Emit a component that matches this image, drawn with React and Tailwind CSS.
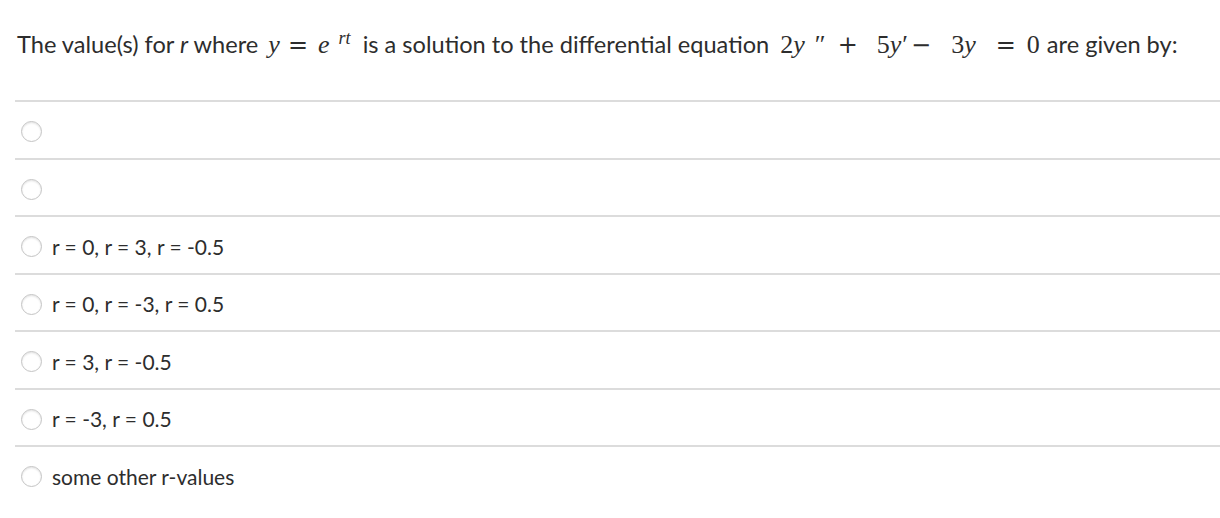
import React from 'react';

const options = [
    '',
    '',
    'r = 0, r = 3, r = -0.5',
    'r = 0, r = -3, r = 0.5',
    'r = 3, r = -0.5',
    'r = -3, r = 0.5',
    'some other r-values',
];

// math pieces: letters in Liberation Serif, operators in DejaVu Serif (wider, like KaTeX)
const Op = ({ children, className = '' }) => (
    <span className={`font-['DejaVu_Serif',serif] not-italic text-[24px] ${className}`}>{children}</span>
);

const Prime = ({ children, className = '' }) => (
    <span className={`font-['Liberation_Serif',serif] not-italic text-[26px] ${className}`}>{children}</span>
);

const Radio = () => (
    <span className="mt-[4px] w-[21px] h-[21px] rounded-full border-[1.5px] border-[#c4c4c4] bg-white shadow-[inset_0_1px_2px_rgba(0,0,0,0.12)] shrink-0"></span>
);

export default function App() {
    return (
        <div className="w-[1220px] h-[518px] bg-white font-['Lato',sans-serif] text-[#2d2d2d] overflow-hidden">
            <p className="pt-[28px] pl-[17px] text-[23.6px] leading-[33px] whitespace-nowrap">
                The value(s) for <i>r</i> where{' '}
                <span className="ml-[4px] mr-[6px] font-['Liberation_Serif',serif] text-[26px]">
                    <i>y</i>
                    <Op className="ml-[8px]">=</Op>
                    <i className="ml-[10px]">e</i>
                    <sup className="ml-[9px] text-[18px]"><i>rt</i></sup>
                </span>{' '}
                is a solution to the differential equation{' '}
                <span className="ml-[5px] mr-[1px] font-['Liberation_Serif',serif] text-[26px]">
                    2<i>y</i>
                    <Prime className="ml-[10px]">″</Prime>
                    <Op className="ml-[12px]">+</Op>
                    <span className="ml-[19px]">5<i>y</i></span>
                    <Prime className="ml-[1px]">′</Prime>
                    <Op className="ml-[3px]">−</Op>
                    <span className="ml-[20px]">3<i>y</i></span>
                    <Op className="ml-[20px]">=</Op>
                    <span className="ml-[11px]">0</span>
                </span>{' '}
                are given by:
            </p>

            <div className="ml-[15px] mt-[38px]">
                {options.map((text, i) => (
                    <div
                        key={i}
                        className="h-[57.5px] flex items-center pl-[6px] gap-[10px] border-t-2 border-[#dcdcdc]"
                    >
                        <Radio />
                        <span className="text-[21px] mt-[3px]">{text}</span>
                    </div>
                ))}
            </div>
        </div>
    );
}
